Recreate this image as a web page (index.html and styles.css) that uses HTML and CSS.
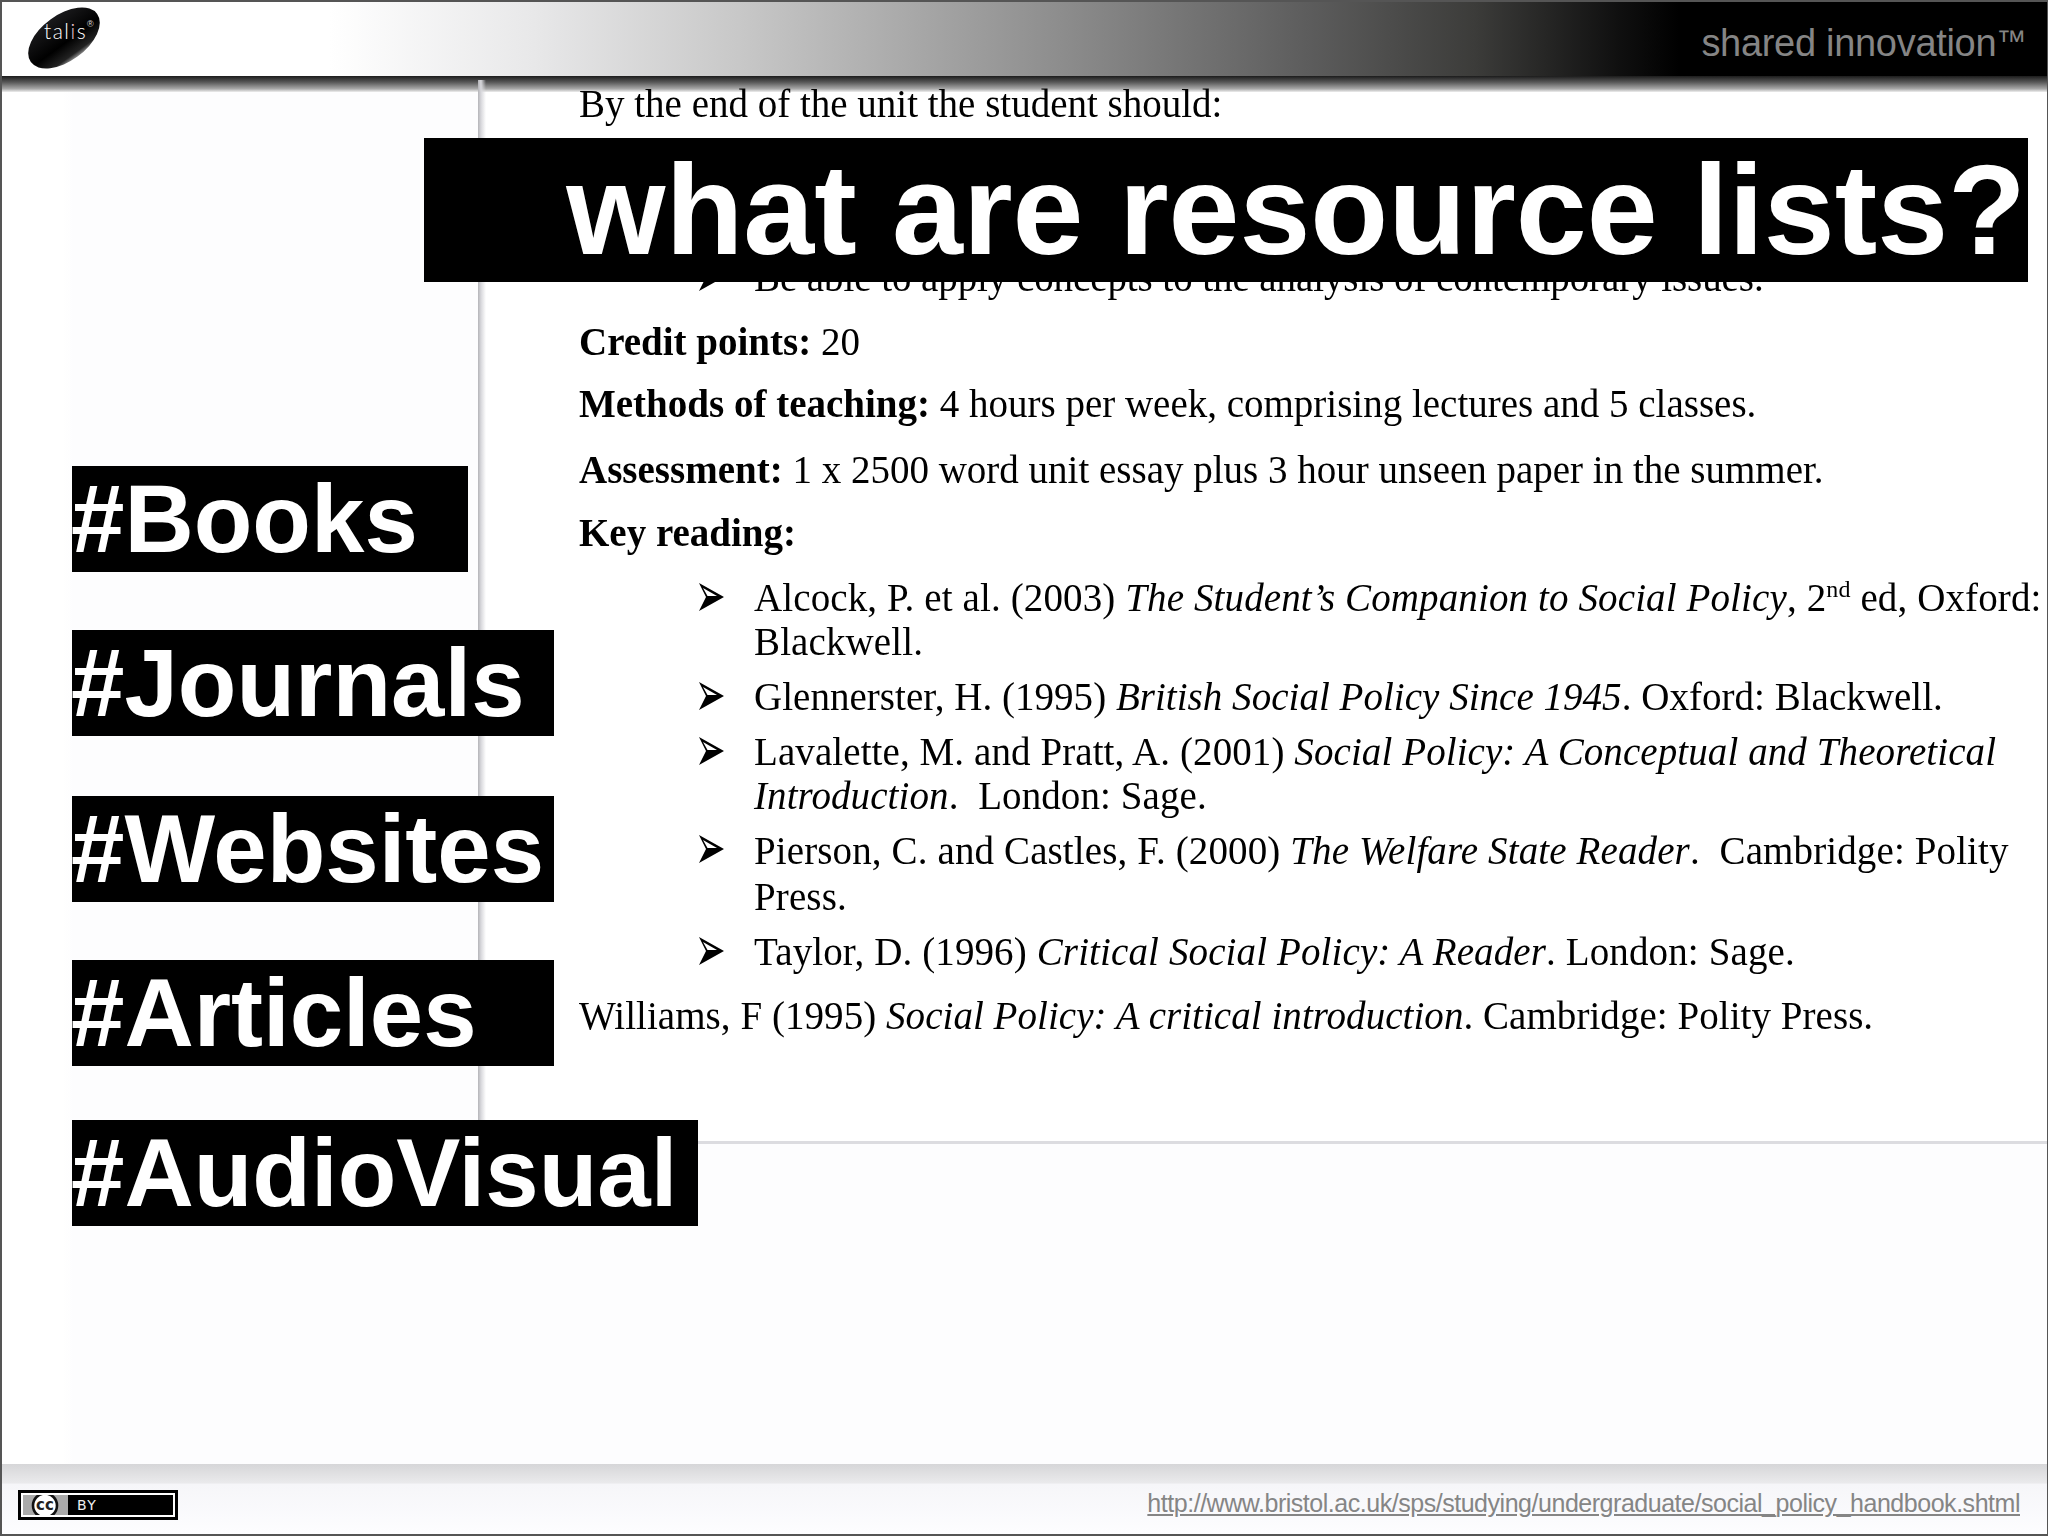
FILE: index.html
```html
<!DOCTYPE html>
<html lang="en">
<head>
    <meta charset="UTF-8">
    <title>what are resource lists?</title>
    <link rel="stylesheet" href="styles.css">
</head>
<body>
    <svg class="defs" width="0" height="0">
        <symbol id="arrow" viewBox="0 0 26 28">
            <path d="M1 0 L26 14 L1 28 L8 14 Z" fill="#000"/>
            <path d="M5 5 L19 13 L9.5 13 Z" fill="#fff"/>
        </symbol>
    </svg>

    <div class="slide">
        <header class="top-bar">
            <svg class="logo" width="76" height="60" viewBox="0 0 76 60">
                <defs>
                    <linearGradient id="pebble" x1="0" y1="0" x2="0" y2="1">
                        <stop offset="0" stop-color="#1a1a1c"/>
                        <stop offset="0.6" stop-color="#000"/>
                        <stop offset="0.9" stop-color="#222"/>
                        <stop offset="1" stop-color="#8a8a8a"/>
                    </linearGradient>
                </defs>
                <ellipse cx="38" cy="30" rx="41" ry="23" transform="rotate(-36 38 30)" fill="url(#pebble)"/>
                <text class="logo-text" x="18" y="31">tal<tspan class="logo-i">i</tspan>s</text>
                <text class="logo-mark" x="61" y="19">®</text>
            </svg>
            <div class="tagline">shared innovation<span class="tm">™</span></div>
        </header>
        <div class="top-shadow"></div>

        <main class="canvas">
            <div class="doc">
                <p class="line-first">By the end of the unit the student should:</p>
                <ul class="reading reading-clipped">
                    <li><svg class="arrow"><use href="#arrow"/></svg>Be able to apply concepts to the analysis of contemporary issues.</li>
                </ul>
                <p class="gap-a"><b>Credit points:</b> 20</p>
                <p class="gap-b"><b>Methods of teaching:</b> 4 hours per week, comprising lectures and 5 classes.</p>
                <p class="gap-c"><b>Assessment:</b> 1 x 2500 word unit essay plus 3 hour unseen paper in the summer.</p>
                <p class="gap-key"><b>Key reading:</b></p>
                <ul class="reading">
                    <li><svg class="arrow"><use href="#arrow"/></svg>Alcock, P. et al. (2003) <i>The Student’s Companion to Social Policy</i>, 2<sup>nd</sup> ed, Oxford:<br>Blackwell.</li>
                    <li class="item-narrow"><svg class="arrow"><use href="#arrow"/></svg>Glennerster, H. (1995) <i>British Social Policy Since 1945</i>. Oxford: Blackwell.</li>
                    <li class="item-tight"><svg class="arrow"><use href="#arrow"/></svg>Lavalette, M. and Pratt, A. (2001) <i>Social Policy: A Conceptual and Theoretical<br>Introduction</i>.&nbsp; London: Sage.</li>
                    <li class="item-loose"><svg class="arrow"><use href="#arrow"/></svg>Pierson, C. and Castles, F. (2000) <i>The Welfare State Reader</i>.&nbsp; Cambridge: Polity<br>Press.</li>
                    <li><svg class="arrow"><use href="#arrow"/></svg>Taylor, D. (1996) <i>Critical Social Policy: A Reader</i>. London: Sage.</li>
                </ul>
                <p class="gap-d">Williams, F (1995) <i>Social Policy: A critical introduction</i>. Cambridge: Polity Press.</p>
            </div>

            <h1 class="title">what are resource lists?</h1>

            <div class="tags">
                <div class="tag tag-short">#Books</div>
                <div class="tag tag-mid">#Journals</div>
                <div class="tag tag-mid tag-websites">#Websites</div>
                <div class="tag tag-mid">#Articles</div>
                <div class="tag tag-long">#AudioVisual</div>
            </div>
        </main>

        <footer class="bottom-bar">
            <div class="cc-badge">
                <span class="cc-icon">
                    <svg width="34" height="21" viewBox="0 0 34 21">
                        <circle cx="16" cy="10.5" r="12" fill="#fff" stroke="#111" stroke-width="2.6"/>
                        <text class="cc-text" x="16" y="15">cc</text>
                    </svg>
                </span>
                <span class="cc-by">BY</span>
            </div>
            <a class="source" href="#">http://www.bristol.ac.uk/sps/studying/undergraduate/social_policy_handbook.shtml</a>
        </footer>
    </div>
</body>
</html>
```

FILE: styles.css
```css
*{margin: 0; padding: 0; box-sizing: border-box;}

html, body{
    width: 2048px;
    height: 1536px;
    overflow: hidden;
    background-color: #fff;
}

.defs{ position: absolute; }

.slide{
    width: 2048px;
    height: 1536px;
    display: flex;
    flex-direction: column;
    border: 2px solid #555;
    border-right-width: 1px;
    overflow: hidden;
    font-family: "Liberation Sans", Arial, sans-serif;
}

/* top bar */
.top-bar{
    height: 74px;
    flex-shrink: 0;
    display: flex;
    align-items: center;
    justify-content: space-between;
    padding: 0 21px 0 24px;
    background: linear-gradient(90deg, #fff 16%, #e8e8e9 26%, #c8c8c8 36%, #8c8c8c 52%, #5c5c5c 64%, #3c3c3a 72%, #101010 79%, #000 82%);
}

.logo{ overflow: visible; margin-top: -3px; }
.logo-text{ font-family: "Lato", sans-serif; font-weight: 300; font-size: 21px; letter-spacing: 1.5px; fill: #fff; }
.logo-i{ fill: #f0c8d4; }
.logo-mark{ font-family: "Liberation Sans", sans-serif; font-size: 9px; fill: #ddd; }

.tagline{
    color: #858585;
    font-size: 38px;
    letter-spacing: -0.3px;
    margin-top: 8px;
}
.tm{ font-size: 30px; vertical-align: 5px; }

.top-shadow{
    height: 16px;
    flex-shrink: 0;
    background: linear-gradient(180deg, #1c1c1c, #5a5a5a 40%, #a8a8a8 80%, #eee);
}

/* main area */
.canvas{
    flex: 1;
    position: relative;
    background: linear-gradient(90deg, #fff 60px, #fdfdfe 72px);
}

.doc{
    position: absolute;
    left: 476px;
    top: -12px;
    right: 0;
    height: 1064px;
    padding-left: 101px;
    border-bottom: 3px solid #dcdce0;
    background:
        linear-gradient(90deg, #b4b4b8, #d8d8dc 3px, transparent 8px),
        linear-gradient(#fff, #fff) 0 12px no-repeat;
    color: #000;
    font-family: "Liberation Serif", "Times New Roman", serif;
    font-size: 39px;
    line-height: 44px;
    white-space: nowrap;
    filter: blur(0.7px);
}

.line-first{ margin-top: 2px; }
.gap-a{ margin-top: 20px; }
.gap-b{ margin-top: 18px; }
.gap-c{ margin-top: 22px; }
.gap-key{ margin-top: 19px; }
.gap-d{ margin-top: 20px; letter-spacing: 0.05px; }

.reading{
    list-style: none;
    margin-top: 21px;
    padding-left: 175px;
    letter-spacing: 0.12px;
}
.reading li{ position: relative; margin-bottom: 11px; }
.reading .item-narrow{ letter-spacing: 0.03px; }
.reading .item-tight{ margin-bottom: 10px; letter-spacing: 0.09px; }
.reading .item-loose{ line-height: 46px; margin-bottom: 10px; }
.arrow{
    position: absolute;
    left: -56px;
    top: 7px;
    width: 26px;
    height: 28px;
}
.reading sup{ font-size: 24px; line-height: 0; }
.reading-clipped{ margin-top: 130px; letter-spacing: -0.08px; }

.title{
    position: absolute;
    left: 422px;
    top: 46px;
    width: 1604px;
    height: 144px;
    padding-right: 2px;
    background-color: #000;
    color: #fff;
    font-size: 127.5px;
    line-height: 144px;
    font-weight: bold;
    text-align: right;
    white-space: nowrap;
}

/* tags */
.tags{
    position: absolute;
    left: 70px;
    top: 374px;
    display: flex;
    flex-direction: column;
    align-items: flex-start;
    gap: 58px;
}
.tag{
    height: 106px;
    background-color: #000;
    color: #fff;
    font-size: 96px;
    line-height: 106px;
    font-weight: bold;
    text-indent: -1px;
    white-space: nowrap;
}
.tag-short{ width: 396px; }
.tag-mid{ width: 482px; }
.tag-long{ width: 626px; margin-top: -4px; }
.tag-websites{ margin-top: 2px; }

/* footer */
.bottom-bar{
    height: 70px;
    flex-shrink: 0;
    display: flex;
    align-items: flex-start;
    justify-content: space-between;
    padding: 26px 27px 0 16px;
    background: linear-gradient(180deg, #d6d6d8, #eaeaec 27%, #f6f6f9 29%, #fdfdff);
}

.cc-badge{
    width: 160px;
    height: 30px;
    display: flex;
    align-items: center;
    background-color: #000;
    border: 3px solid #000;
    outline: 2px solid #fff;
    outline-offset: -5px;
    padding: 0 2px;
}
.cc-icon{
    display: flex;
    width: 45px;
    height: 20px;
    justify-content: center;
    align-items: center;
    background-color: #aaa;
    overflow: hidden;
}
.cc-text{ font-family: "DejaVu Sans", sans-serif; font-weight: bold; font-size: 15px; text-anchor: middle; fill: #222; }
.cc-by{
    color: #eee;
    font-family: "DejaVu Sans", sans-serif;
    font-size: 14px;
    letter-spacing: 1.5px;
    margin-left: 9px;
}

.source{
    color: #858585;
    font-size: 25px;
    letter-spacing: -0.47px;
    line-height: 28px;
    margin-top: -1px;
}
```
